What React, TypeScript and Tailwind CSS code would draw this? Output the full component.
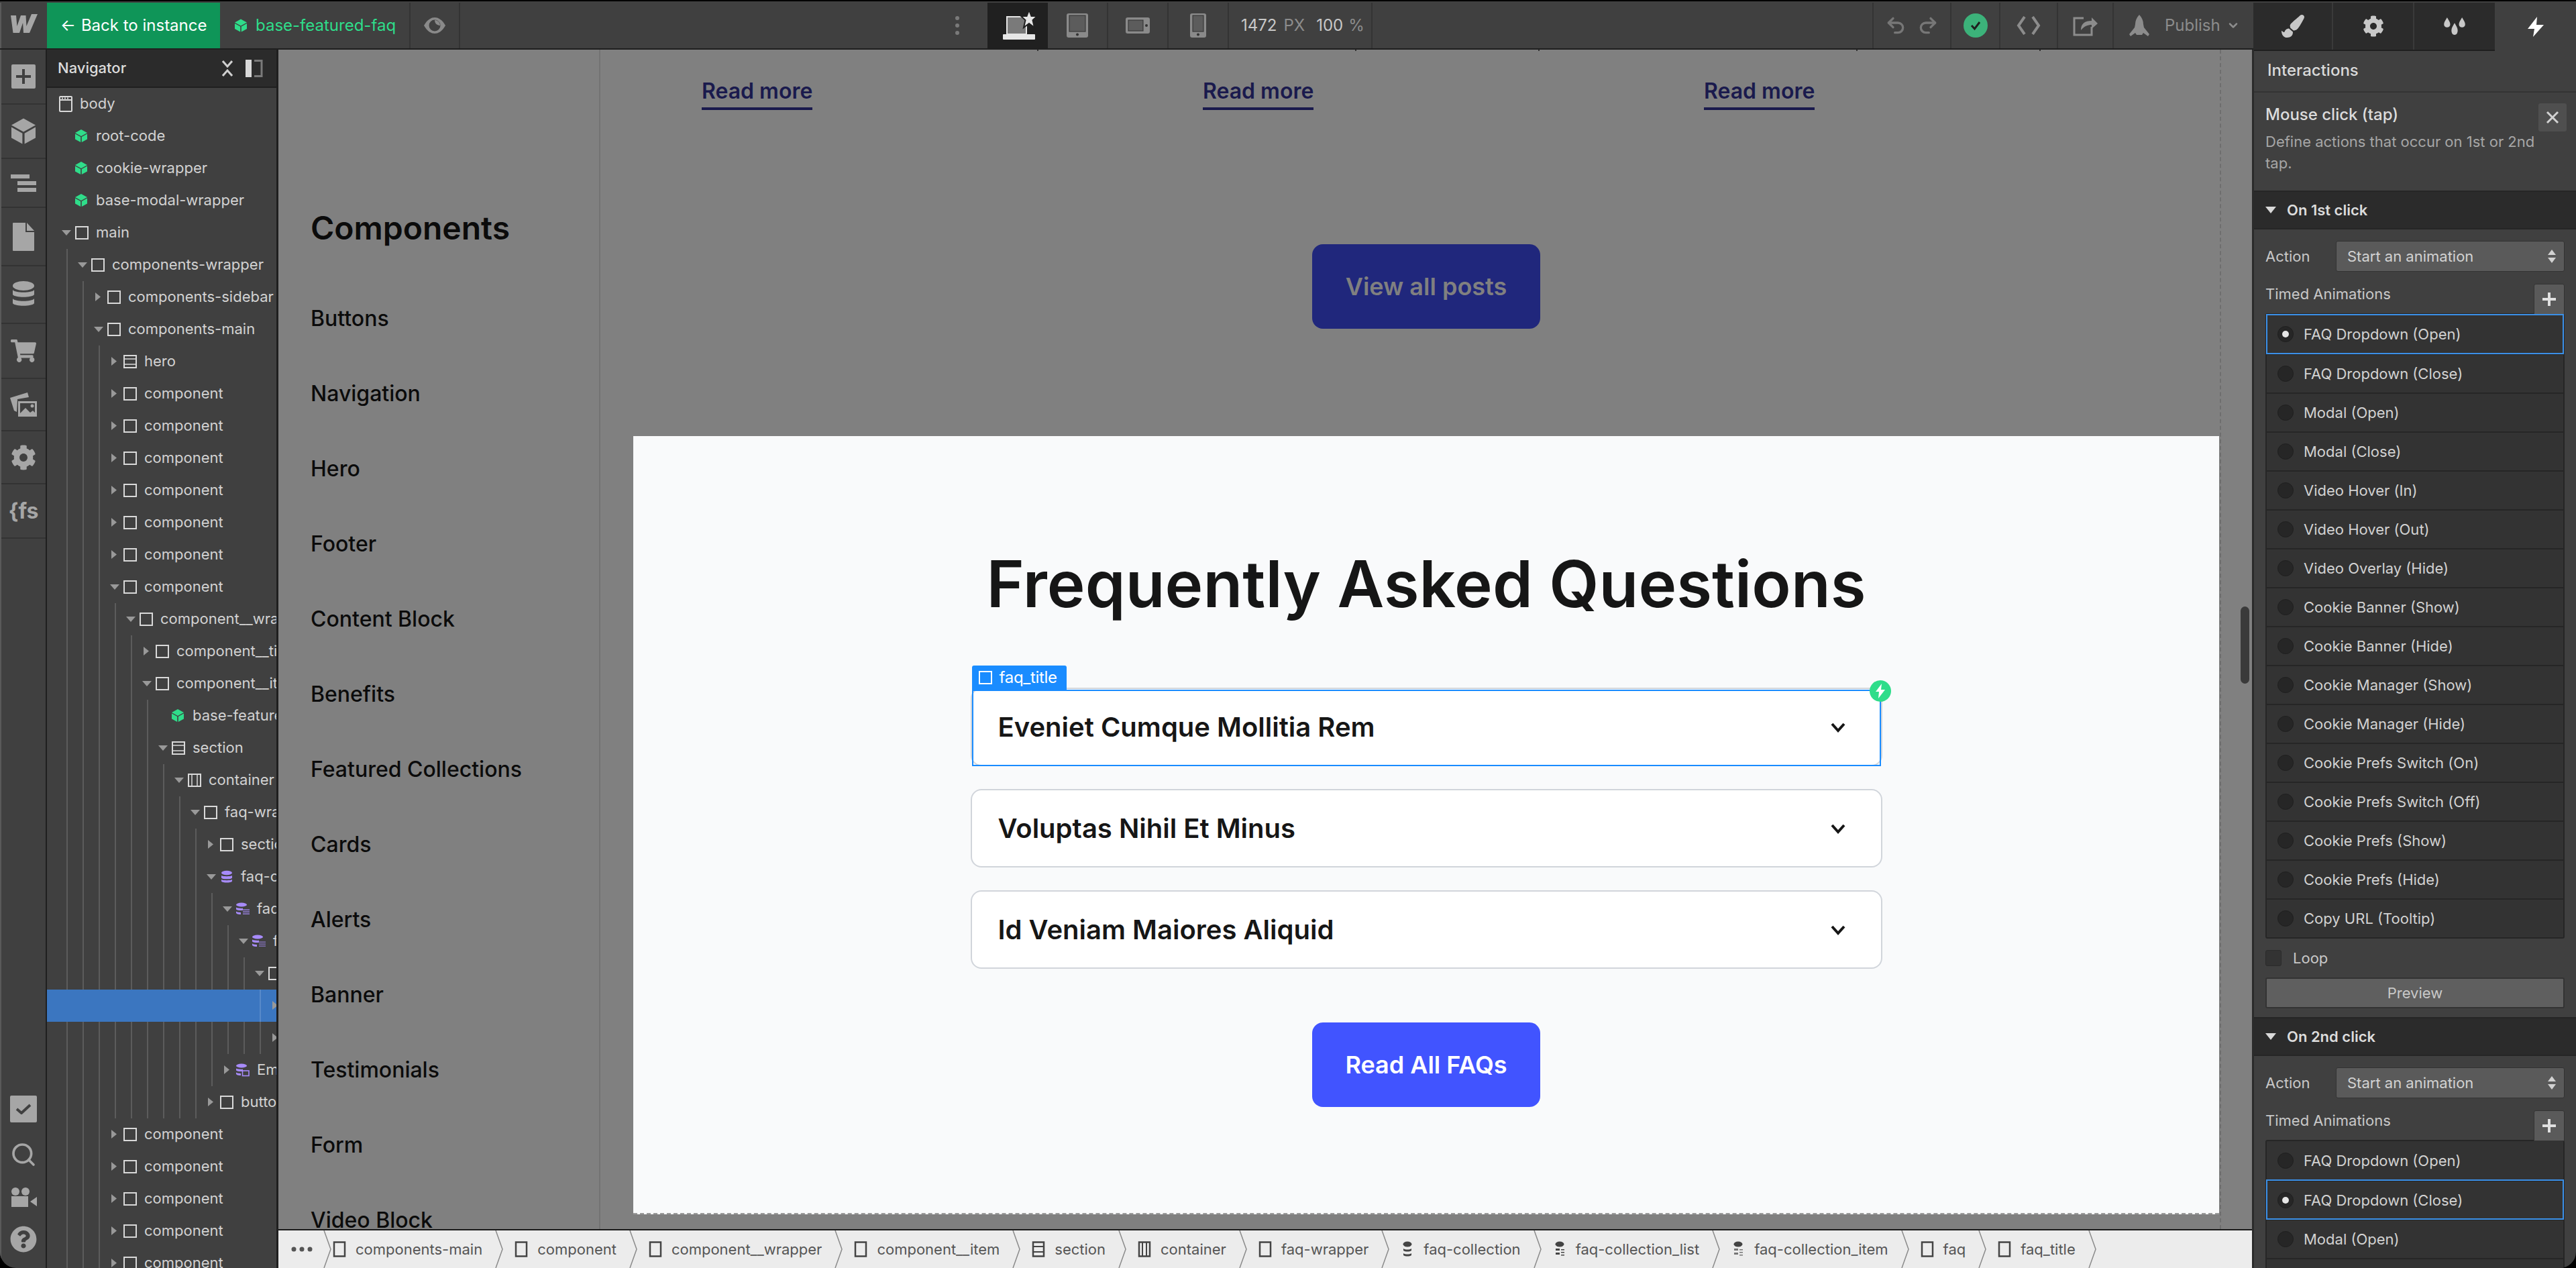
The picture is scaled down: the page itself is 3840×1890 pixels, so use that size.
import React from "react";
import { FaCog, FaShoppingCart, FaQuestionCircle, FaPaintBrush } from "react-icons/fa";
import { Search, Undo2, Redo2, ChevronDown } from "lucide-react";

type Kind = "box" | "sec" | "con" | "cube" | "col" | "list" | "item" | "empty" | "body";
type N = { t: string; k: Kind; open?: boolean; leaf?: boolean; sel?: boolean; c?: N[] };

const Cube = ({ className }: { className?: string }) => (
  <svg viewBox="0 0 18 19" className={className} fill="currentColor">
    <path d="M9 0 18 5 9 10 0 5Z" />
    <path d="M0 6.500 8.200 11.100V19L0 14.500Z" />
    <path d="M18 6.500 9.800 11.100V19L18 14.500Z" />
  </svg>
);

const KindIcon = ({ k }: { k: Kind }) => {
  if (k === "cube") return <span className="w-5 flex justify-start shrink-0"><Cube className="w-[18px] h-[19px] text-[#2fdd8a]" /></span>;
  if (k === "body")
    return (
      <svg viewBox="0 0 20 24" className="w-5 h-6 text-[#d9d9d9] shrink-0" fill="none" stroke="currentColor" strokeWidth="2">
        <rect x="1" y="1" width="18" height="22" rx="1" />
        <path d="M1 6h18M4 3.500h2M8 3.500h2M12 3.500h2" />
      </svg>
    );
  if (k === "col")
    return (
      <svg viewBox="0 0 20 20" className="w-5 h-5 text-[#a78bfa] shrink-0" fill="currentColor">
        <ellipse cx="10" cy="4" rx="8" ry="3.200" />
        <path d="M2 8c2 1.600 14 1.600 16 0v3.400c-1.500 2.600-14.500 2.600-16 0ZM2 14c2 1.600 14 1.600 16 0v2.400c-1.500 2.800-14.500 2.800-16 0Z" />
      </svg>
    );
  if (k === "list" || k === "item" || k === "empty")
    return (
      <svg viewBox="0 0 20 20" className="w-5 h-5 text-[#a78bfa] shrink-0" fill="currentColor">
        <ellipse cx="8" cy="3.500" rx="8" ry="3" />
        <path d="M0 7.500c2 1.300 8 1.600 10 1.300v3c-3 .6-8 .3-10-1.300ZM0 13.500c2 1.300 5 1.500 7 1.400v3c-3 .3-6-.3-7-1.800Z" />
        {k === "empty" ? (
          <rect x="9.500" y="11" width="9.500" height="7.500" fill="none" stroke="currentColor" strokeWidth="1.600" />
        ) : (
          <path d="M10 11.200h10M10 14.200h10M10 17.200h10" stroke="currentColor" strokeWidth="1.300" opacity={k === "item" ? 0.75 : 1} />
        )}
      </svg>
    );
  return (
    <svg viewBox="0 0 20 20" className="w-5 h-5 text-[#d9d9d9] shrink-0" fill="none" stroke="currentColor" strokeWidth="2">
      <rect x="1" y="1" width="18" height="18" />
      {k === "sec" && <path d="M1 6h18M1 14h18" strokeWidth="1.500" />}
      {k === "con" && <path d="M6 1v18M14 1v18" strokeWidth="1.500" />}
    </svg>
  );
};

const comp = (): N => ({ t: "component", k: "box" });
const tree: N = {
  t: "body",
  k: "body",
  open: true,
  leaf: true,
  c: [
    { t: "root-code", k: "cube", leaf: true },
    { t: "cookie-wrapper", k: "cube", leaf: true },
    { t: "base-modal-wrapper", k: "cube", leaf: true },
    {
      t: "main",
      k: "box",
      open: true,
      c: [
        {
          t: "components-wrapper",
          k: "box",
          open: true,
          c: [
            { t: "components-sidebar", k: "box" },
            {
              t: "components-main",
              k: "box",
              open: true,
              c: [
                { t: "hero", k: "sec" },
                comp(), comp(), comp(), comp(), comp(), comp(),
                {
                  t: "component",
                  k: "box",
                  open: true,
                  c: [
                    {
                      t: "component__wrapper",
                      k: "box",
                      open: true,
                      c: [
                        { t: "component__title", k: "box" },
                        {
                          t: "component__item",
                          k: "box",
                          open: true,
                          c: [
                            { t: "base-featured-faq", k: "cube", leaf: true },
                            {
                              t: "section",
                              k: "sec",
                              open: true,
                              c: [
                                {
                                  t: "container",
                                  k: "con",
                                  open: true,
                                  c: [
                                    {
                                      t: "faq-wrapper",
                                      k: "box",
                                      open: true,
                                      c: [
                                        { t: "section-header", k: "box" },
                                        {
                                          t: "faq-collection",
                                          k: "col",
                                          open: true,
                                          c: [
                                            {
                                              t: "faq-collection_list",
                                              k: "list",
                                              open: true,
                                              c: [
                                                {
                                                  t: "faq-collection_item",
                                                  k: "item",
                                                  open: true,
                                                  c: [
                                                    {
                                                      t: "faq",
                                                      k: "box",
                                                      open: true,
                                                      c: [
                                                        { t: "faq_title", k: "box", sel: true },
                                                        { t: "faq_content", k: "box" },
                                                      ],
                                                    },
                                                  ],
                                                },
                                              ],
                                            },
                                            { t: "Empty State", k: "empty" },
                                          ],
                                        },
                                        { t: "button", k: "box" },
                                      ],
                                    },
                                  ],
                                },
                              ],
                            },
                          ],
                        },
                      ],
                    },
                  ],
                },
                comp(), comp(), comp(), comp(), comp(), comp(),
              ],
            },
          ],
        },
      ],
    },
  ],
};

const Arrow = ({ open }: { open?: boolean }) =>
  open ? (
    <svg viewBox="0 0 14 8" className="w-[14px] h-2 -ml-[2px] text-[#999]" fill="currentColor">
      <path d="M0 0h14L7 8Z" />
    </svg>
  ) : (
    <svg viewBox="0 0 8 13" className="w-2 h-[13px] text-[#999]" fill="currentColor">
      <path d="M0 0l8 6.500L0 13Z" />
    </svg>
  );

const Node = ({ n, d }: { n: N; d: number }) => (
  <>
    <div
      className={`flex items-center h-12 whitespace-nowrap pb-[1px] ${n.sel ? "bg-[#3b76c0]" : ""}`}
      style={{ paddingLeft: 24 * d }}
    >
      <span className="w-[18px] shrink-0 flex items-center">{!n.leaf && <Arrow open={n.open} />}</span>
      <KindIcon k={n.k} />
      <span className={`ml-[11px] ${n.sel ? "text-white" : "text-[#d2d2d2]"}`}>{n.t}</span>
    </div>
    {n.c && (
      <div className="relative">
        {n.k !== "body" && (
          <div className="absolute top-0 bottom-0 w-[2px] bg-white/15" style={{ left: 5 + 24 * d }} />
        )}
        {n.c.map((x, i) => (
          <Node key={i} n={x} d={d + 1} />
        ))}
      </div>
    )}
  </>
);

const Logo = () => (
  <svg viewBox="0 0 40 28" className="w-10 h-7 text-[#a6a6a6]" fill="currentColor">
    <path d="M40 0 28 28h-9l-.9-15L13 28H3.500L0 2h8l1.400 16L15 2h7.500l.9 16L31 0Z" />
  </svg>
);

const Vsep = () => <div className="w-[2px] self-stretch bg-[#343434] shrink-0" />;

const Device = ({ w, h, kind, active }: { w: number; h: number; kind: string; active?: boolean }) => (
  <div className={`w-[90px] h-full flex items-center justify-center shrink-0 ${active ? "bg-[#202020]" : "border-r-2 border-[#343434]"}`}>
    {kind === "desktop" ? (
      <svg viewBox="0 0 52 46" className="w-[52px] h-[46px] ml-[6px]">
        <path d="M7 10h29v26H7Z" fill="#7a7a7a" stroke="#e6e6e6" strokeWidth="2" />
        <rect x="1" y="36" width="48" height="8" rx="1" fill="#e6e6e6" />
        <path d="M40 0l3.500 9H52l-6.500 6 2.500 11-8-6-8 6 2.500-11L28 9h8.500Z" fill="#e6e6e6" stroke="#202020" strokeWidth="2" />
      </svg>
    ) : (
      <svg viewBox={`0 0 ${w} ${h}`} style={{ width: w, height: h }}>
        <rect width={w} height={h} rx="3" fill="#8a8a8a" />
        {kind === "land" ? (
          <>
            <rect x="4" y="4" width={w - 14} height={h - 8} fill="#5c5c5c" stroke="#2e2e2e" />
            <circle cx={w - 5} cy={h / 2} r="2" fill="#333" />
          </>
        ) : (
          <>
            <rect x="4" y="3" width={w - 8} height={h - 12} fill="#5c5c5c" stroke="#2e2e2e" />
            <circle cx={w / 2} cy={h - 4.500} r="2" fill="#333" />
          </>
        )}
      </svg>
    )}
  </div>
);

const TopBar = () => (
  <div className="flex h-[72px] pt-[2px] bg-[#404040] shrink-0 text-[24px]">
    <div className="flex flex-1 min-w-0 h-[70px] border-b-2 border-[#1f1f1f]">
      <div className="w-[70px] flex items-center justify-center pb-[6px] shrink-0 border-l-2 border-[#5a5a5a]">
        <Logo />
      </div>
      <div className="w-[258px] h-full bg-[#0f9558] text-white flex items-center pl-5 shrink-0 gap-[8px]">
        <span className="leading-none">←</span>
        <span>Back to instance</span>
      </div>
      <div className="w-[282px] flex items-center pl-[22px] gap-[13px] text-[#2fdd8a] shrink-0 whitespace-nowrap">
        <Cube className="w-[18px] h-5" />
        <span>base-featured-faq</span>
      </div>
      <Vsep />
      <div className="w-[72px] flex items-center justify-center shrink-0">
        <svg viewBox="0 0 32 24" className="w-8 h-6">
          <path d="M0 12C5 3 11 0 16 0s11 3 16 12c-5 9-11 12-16 12S5 21 0 12Z" fill="#8a8a8a" />
          <circle cx="16" cy="12" r="8.500" fill="#404040" />
          <path d="M16 4a8 8 0 0 1 8 8c-3 0-8-2-8-8Z" fill="#8a8a8a" />
        </svg>
      </div>
      <Vsep />
      <div className="w-[786px] flex items-center justify-end pr-[42px] shrink-0">
        <svg viewBox="0 0 6 28" className="w-[6px] h-7 text-[#7a7a7a]" fill="currentColor">
          <circle cx="3" cy="3" r="3" /><circle cx="3" cy="14" r="3" /><circle cx="3" cy="25" r="3" />
        </svg>
      </div>
      <Device w={0} h={0} kind="desktop" active />
      <Device w={32} h={36} kind="port" />
      <Device w={36} h={24} kind="land" />
      <Device w={24} h={36} kind="port" />
      <div className="w-[212px] flex items-center pl-[18px] shrink-0 text-[#c8c8c8]">
        <span>1472</span>
        <span className="ml-[10px] text-[#8c8c8c]">PX</span>
        <span className="ml-[17px]">100</span>
        <span className="ml-[8px] text-[#8c8c8c]">%</span>
      </div>
      <Vsep />
      <div className="flex-1" />
      <Vsep />
      <div className="w-[114px] flex items-center justify-center gap-[16px] shrink-0 text-[#777]">
        <Undo2 size={32} strokeWidth={2.5} />
        <Redo2 size={32} strokeWidth={2.5} />
      </div>
      <Vsep />
      <div className="w-[71px] flex items-center justify-center shrink-0">
        <div className="w-9 h-9 rounded-full bg-[#3cb27a] flex items-center justify-center">
          <svg viewBox="0 0 20 20" className="w-5 h-5" fill="none" stroke="#1f1f1f" strokeWidth="3">
            <path d="M4 10l4.500 5L16 5" />
          </svg>
        </div>
      </div>
      <Vsep />
      <div className="w-[84px] flex items-center justify-center shrink-0">
        <svg viewBox="0 0 40 28" className="w-10 h-7 text-[#8c8c8c]" fill="none" stroke="currentColor" strokeWidth="4">
          <path d="M14 1 5 14l9 13M26 1l9 13-9 13" />
        </svg>
      </div>
      <Vsep />
      <div className="w-[81px] flex items-center justify-center shrink-0">
        <svg viewBox="0 0 38 32" className="w-[38px] h-8 text-[#8c8c8c]" fill="none" stroke="currentColor" strokeWidth="3">
          <path d="M16 5H2v25h26V18" />
          <path d="M12 23c0-10 6-14 16-14V4l9 9-9 8v-6c-6 0-11 2-16 8Z" fill="currentColor" stroke="none" />
        </svg>
      </div>
      <Vsep />
      <div className="w-[208px] flex items-center pl-[22px] shrink-0 text-[#8c8c8c] text-[24px]">
        <svg viewBox="0 0 32 32" className="w-8 h-8 shrink-0" fill="currentColor">
          <path d="M16 0c4 4 6 9 6 14l1 5 8 10-2 3-7-5-2 3h-8l-2-3-7 5-2-3 8-10 1-5c0-5 2-10 6-14Z" />
        </svg>
        <span className="ml-[22px]">Publish</span>
        <ChevronDown size={20} strokeWidth={3} className="ml-[9px]" />
      </div>
    </div>
    <div className="w-[481px] flex shrink-0 h-[72px]">
      <div className="w-[360px] flex bg-[#2b2b2b] border-b-2 border-[#1f1f1f]">
        <div className="w-[119px] flex items-center justify-center text-[#c8c8c8] border-r-2 border-[#3a3a3a]">
          <FaPaintBrush size={34} />
        </div>
        <div className="w-[121px] flex items-center justify-center text-[#c8c8c8] border-r-2 border-[#3a3a3a]">
          <FaCog size={32} />
        </div>
        <div className="w-[120px] flex items-center justify-center text-[#c8c8c8]">
          <svg viewBox="0 0 36 28" className="w-[34px] h-[26px]" fill="currentColor">
            <path d="M6 0c3 5 5 8 5 11 0 3-2 5-5 5s-5-2-5-5c0-3 2-6 5-11ZM30 0c3 5 5 8 5 11 0 3-2 5-5 5s-5-2-5-5c0-3 2-6 5-11ZM18 9c3 5 5 8 5 12 0 4-2 7-5 7s-5-3-5-7c0-4 2-7 5-12Z" />
          </svg>
        </div>
      </div>
      <div className="flex-1 flex items-center justify-center text-white">
        <svg viewBox="0 0 24 30" className="w-6 h-[30px]" fill="currentColor">
          <path d="M14 0 0 18h10L8 30l16-18H13Z" />
        </svg>
      </div>
    </div>
  </div>
);

const RailCell = ({ h, children }: { h: string; children: React.ReactNode }) => (
  <div className={`${h} flex items-center justify-center border-b-2 border-[#333] shrink-0`}>{children}</div>
);

const Rail = () => (
  <div className="w-[70px] shrink-0 flex flex-col border-l-2 border-[#5a5a5a] border-r-2 border-r-[#1f1f1f] text-[#a6a6a6] pb-[23px]">
    <RailCell h="h-[82px]">
      <div className="w-9 h-9 bg-[#a6a6a6] rounded-[2px] flex items-center justify-center">
        <svg viewBox="0 0 22 22" className="w-[22px] h-[22px]"><path d="M9 0h4v9h9v4h-9v9H9v-9H0V9h9Z" fill="#404040" /></svg>
      </div>
    </RailCell>
    <RailCell h="h-[81px]"><Cube className="w-9 h-[39px]" /></RailCell>
    <RailCell h="h-[73px]">
      <svg viewBox="0 0 38 26" className="w-[38px] h-[26px]" fill="currentColor">
        <path d="M0 0h28v6H0ZM10 10h28v6H10ZM10 20h28v6H10Z" />
      </svg>
    </RailCell>
    <RailCell h="h-[87px]">
      <svg viewBox="0 0 32 42" className="w-8 h-[42px]" fill="currentColor">
        <path d="M0 1a1 1 0 0 1 1-1h18v14h13v27a1 1 0 0 1-1 1H1a1 1 0 0 1-1-1Z" />
        <path d="M21 0l11 12H21Z" />
      </svg>
    </RailCell>
    <RailCell h="h-[86px]">
      <svg viewBox="0 0 32 40" className="w-8 h-10" fill="currentColor">
        <ellipse cx="16" cy="7" rx="16" ry="7" />
        <path d="M0 13c3 5 29 5 32 0v7c-3 5-29 5-32 0ZM0 26c3 5 29 5 32 0v7c-3 5-29 5-32 0Z" />
      </svg>
    </RailCell>
    <RailCell h="h-[82px]"><FaShoppingCart size={38} /></RailCell>
    <RailCell h="h-[78px]">
      <svg viewBox="0 0 40 36" className="w-10 h-9" fill="currentColor">
        <path d="M0 8 26 0l2 7-17 3-1 19-4-2Z" />
        <path d="M12 13h28v23H12Zm3 3v15l8-8 7 7 4-3 3 3V16Z" fillRule="evenodd" />
        <circle cx="33" cy="20" r="2.500" />
      </svg>
    </RailCell>
    <RailCell h="h-[79px]"><FaCog size={38} /></RailCell>
    <RailCell h="h-[81px]"><span className="text-[32px] font-bold leading-none">{"{fs"}</span></RailCell>
    <div className="mt-auto flex flex-col items-center gap-[28px]">
      <div className="w-10 h-10 bg-[#a6a6a6] rounded-[2px] flex items-center justify-center">
        <svg viewBox="0 0 24 16" className="w-6 h-4" fill="none" stroke="#404040" strokeWidth="4"><path d="M2 8l7 6L22 2" /></svg>
      </div>
      <Search size={40} strokeWidth={2.2} />
      <svg viewBox="0 0 40 30" className="w-10 h-[30px]" fill="currentColor">
        <circle cx="8" cy="7" r="6" /><circle cx="23" cy="7" r="6" />
        <path d="M2 14h25v16H2ZM30 22l10-7v14Z" />
      </svg>
      <FaQuestionCircle size={40} />
    </div>
  </div>
);

const Nav = () => (
  <div className="w-[345px] shrink-0 border-r-[3px] border-[#1f1f1f] overflow-hidden flex flex-col text-[22px]">
    <div className="h-[57px] bg-[#2b2b2b] border-b-2 border-[#1f1f1f] flex items-center pl-[16px] pr-[20px] shrink-0">
      <span className="text-[#dcdcdc] font-medium flex-1">Navigator</span>
      <svg viewBox="0 0 16 24" className="w-4 h-6 mr-[19px] text-[#cfcfcf]" fill="none" stroke="currentColor" strokeWidth="3">
        <path d="M1 1l7 8 7-8M1 23l7-8 7 8" />
      </svg>
      <svg viewBox="0 0 26 26" className="w-[26px] h-[26px]">
        <rect width="9" height="26" fill="#d9d9d9" />
        <path d="M13 1.500h11v23H13" fill="none" stroke="#7a7a7a" strokeWidth="3" />
      </svg>
    </div>
    <div className="shrink-0">
      <Node n={tree} d={0} />
    </div>
  </div>
);

const faqs = ["Eveniet Cumque Mollitia Rem", "Voluptas Nihil Et Minus", "Id Veniam Maiores Aliquid"];
const sideItems = ["Buttons", "Navigation", "Hero", "Footer", "Content Block", "Benefits", "Featured Collections", "Cards", "Alerts", "Banner", "Testimonials", "Form", "Video Block"];

const FaqItem = ({ t, selected }: { t: string; selected?: boolean }) => (
  <div className="relative h-[117px] w-full rounded-2xl border-2 border-[#d1d5db] bg-white flex items-center pl-[39px] pr-[52px]">
    <span className="flex-1 text-[40px] font-semibold text-[#161616] leading-none">{t}</span>
    <svg viewBox="0 0 24 16" className="w-6 h-4 text-[#161616]" fill="none" stroke="currentColor" strokeWidth="4">
      <path d="M3 3l9 10 9-10" />
    </svg>
    {selected && (
      <>
        <div className="absolute left-0 right-0 top-px -bottom-[2px] border-2 border-[#1a8cff] pointer-events-none" />
        <div className="absolute left-0 -top-[35px] h-[36px] w-[141px] bg-[#1a8cff] rounded-t-[3px] flex items-center pl-[10px] gap-[11px] text-white text-[24px] leading-none font-normal">
          <svg viewBox="0 0 20 20" className="w-5 h-5 shrink-0" fill="none" stroke="currentColor" strokeWidth="2"><rect x="1" y="1" width="18" height="18" /></svg>
          <span className="tracking-[-0.3px]">faq_title</span>
        </div>
        <div className="absolute -right-[15px] -top-[13px] w-8 h-8 rounded-full bg-[#2fdd8a] flex items-center justify-center">
          <svg viewBox="0 0 14 22" className="w-[14px] h-[22px]" fill="#ffffff"><path d="M9 0 0 12h5L4 22l10-13H8Z" /></svg>
        </div>
      </>
    )}
  </div>
);

const ticks = [1131, 1605, 1878, 2352, 2625];

const Canvas = () => (
  <div className="relative flex-1 min-h-0 flex bg-[#808080] overflow-hidden font-medium">
    <div className="w-[480px] shrink-0 border-r-2 border-[#737373] pl-[48px] pt-[235px]">
      <div className="h-[62px] flex items-center text-[48px] font-semibold text-[#0b0b0b] leading-none mb-[48px]">Components</div>
      <div className="flex flex-col">
        {sideItems.map((s) => (
          <div key={s} className="h-[112px] shrink-0 flex items-center text-[32px] text-[#0b0b0b] leading-none">{s}</div>
        ))}
      </div>
    </div>
    <div className="pl-[49px] flex flex-col">
      <div className="w-[2364px] flex flex-col items-center shrink-0">
        <div className="w-full flex pl-[102px] pt-[42px]">
          {[0, 1, 2].map((i) => (
            <div key={i} className="w-[747px] shrink-0">
              <span className="inline-block h-[48px] leading-[40px] text-[32px] font-semibold text-[#1a1a4d] border-b-4 border-[#1a1a4d]">Read more</span>
            </div>
          ))}
        </div>
        <div className="mt-[200px] w-[340px] h-[126px] rounded-2xl bg-[#20277c] text-[#808080] flex items-center justify-center text-[36px] font-semibold">View all posts</div>
      </div>
      <div className="mt-[160px] w-[2364px] h-[1160px] shrink-0 bg-[#f9fafb] border-b-2 border-dashed border-[#9a9a9a] flex flex-col items-center pt-[158px]">
        <h1 className="h-[124px] leading-[124px] text-[96px] font-semibold text-[#161616] tracking-[0.1px]">Frequently Asked Questions</h1>
        <div className="mt-[93px] w-[1359px] flex flex-col gap-[34px]">
          {faqs.map((f, i) => (
            <FaqItem key={f} t={f} selected={i === 0} />
          ))}
        </div>
        <div className="mt-[80px] w-[340px] h-[126px] rounded-2xl bg-[#4154ff] text-white flex items-center justify-center text-[36px] font-semibold">Read All FAQs</div>
      </div>
    </div>
    <div className="w-[2px] h-full ml-px border-l-2 border-dashed border-[#6e6e6e] shrink-0" />
    <div className="absolute left-[2925px] top-[830px] w-[13px] h-[115px] rounded-full bg-[#3a3a3a]" />
    {ticks.map((x) => (
      <div key={x} className="absolute top-0 w-[2px] h-[2px] bg-[#333]" style={{ left: x }} />
    ))}
  </div>
);

const crumbs: { t: string; k: Kind }[] = [
  { t: "components-main", k: "box" },
  { t: "component", k: "box" },
  { t: "component__wrapper", k: "box" },
  { t: "component__item", k: "box" },
  { t: "section", k: "sec" },
  { t: "container", k: "con" },
  { t: "faq-wrapper", k: "box" },
  { t: "faq-collection", k: "col" },
  { t: "faq-collection_list", k: "list" },
  { t: "faq-collection_item", k: "item" },
  { t: "faq", k: "box" },
  { t: "faq_title", k: "box" },
];

const Tip = () => (
  <svg viewBox="0 0 14 56" className="w-[14px] h-[56px] shrink-0 text-[#8a8a8a]" fill="none" stroke="currentColor" strokeWidth="1.500">
    <path d="M1 0l10 28L1 56" />
  </svg>
);

const CrumbIcon = ({ k }: { k: Kind }) => {
  if (k === "col" || k === "list" || k === "item")
    return (
      <span className="w-5 flex justify-center shrink-0">
        <svg viewBox="0 0 14 24" className="w-[14px] h-6 text-[#444]" fill="currentColor">
          <ellipse cx="7" cy="4.500" rx="6.500" ry="4" />
          {k === "col" ? (
            <path d="M1 11c3 2 9 2 12 0v3c-3 2-9 2-12 0ZM1 18c3 2 9 2 12 0v3c-3 2-9 2-12 0Z" />
          ) : (
            <path d="M1 11h6v3H1ZM1 17h6v3H1ZM9 12h5v1.500H9ZM9 16h5v1.500H9ZM9 20h5v1.500H9Z" opacity={k === "item" ? 0.7 : 1} />
          )}
        </svg>
      </span>
    );
  return (
    <svg viewBox="0 0 20 24" className="w-5 h-6 shrink-0 text-[#444]" fill="none" stroke="currentColor" strokeWidth="2.500">
      <rect x="2" y="1.500" width="16" height="21" />
      {k === "sec" && <path d="M2 8h16M2 16h16" strokeWidth="2" />}
      {k === "con" && <path d="M7 1.500v21M13 1.500v21" strokeWidth="2" />}
    </svg>
  );
};

const Breadcrumbs = () => (
  <div className="h-[58px] shrink-0 border-t-2 border-[#1a1a1a] bg-[#ececec] flex items-center text-[22px] text-[#555] whitespace-nowrap overflow-hidden">
    <div className="w-[67px] shrink-0 flex items-center justify-center pl-[2px]">
      <svg viewBox="0 0 32 8" className="w-8 h-2" fill="#555"><circle cx="4" cy="4" r="3.500" /><circle cx="16" cy="4" r="3.500" /><circle cx="28" cy="4" r="3.500" /></svg>
    </div>
    <Tip />
    {crumbs.map((c, i) => (
      <div key={c.t} className={`flex items-center shrink-0 ${i === 0 ? "" : "pl-[15px]"}`}>
        <CrumbIcon k={c.k} />
        <span className="ml-[14px]">{c.t}</span>
        <span className="w-[19px]" />
        <Tip />
      </div>
    ))}
  </div>
);

const anims = [
  "FAQ Dropdown (Open)", "FAQ Dropdown (Close)", "Modal (Open)", "Modal (Close)", "Video Hover (In)", "Video Hover (Out)",
  "Video Overlay (Hide)", "Cookie Banner (Show)", "Cookie Banner (Hide)", "Cookie Manager (Show)", "Cookie Manager (Hide)",
  "Cookie Prefs Switch (On)", "Cookie Prefs Switch (Off)", "Cookie Prefs (Show)", "Cookie Prefs (Hide)", "Copy URL (Tooltip)",
];

const AnimList = ({ items, active }: { items: string[]; active: number }) => (
  <div className="border-2 border-[#262626] rounded-[3px] bg-[#333] -mt-px">
    {items.map((a, i) => (
      <div
        key={a}
        className={`h-[58px] flex items-center pl-[16px] text-[#d2d2d2] ${i === active ? "outline-2 -outline-offset-1 outline-[#3b90e8] relative" : ""} ${i > 0 ? "border-t-2 border-[#262626]" : ""}`}
      >
        <div className="w-6 h-6 rounded-full bg-[#262626] border border-[#1f1f1f] flex items-center justify-center shrink-0">
          {i === active && <div className="w-[10px] h-[10px] rounded-full bg-[#e6e6e6]" />}
        </div>
        <span className="ml-[15px]">{a}</span>
      </div>
    ))}
  </div>
);

const ActionBlock = ({ title, items, active }: { title: string; items: string[]; active: number }) => (
  <>
    <div className="h-[58px] bg-[#2b2b2b] border-y-2 border-[#262626] flex items-center px-[17px] shrink-0">
      <svg viewBox="0 0 16 10" className="w-4 h-[10px] text-[#d9d9d9]" fill="currentColor"><path d="M0 0h16L8 10Z" /></svg>
      <span className="ml-[16px] font-semibold text-[#dcdcdc]">{title}</span>
    </div>
    <div className="px-[17px] pt-[17px] shrink-0">
      <div className="flex items-center h-[46px]">
        <span className="w-[105px] text-[#c8c8c8]">Action</span>
        <div className="flex-1 h-[46px] rounded-[3px] bg-[#5a5a5a] border border-[#333] flex items-center pl-[16px] pr-[12px] text-[#d2d2d2]">
          <span className="flex-1">Start an animation</span>
          <svg viewBox="0 0 12 20" className="w-3 h-5 text-[#d2d2d2]" fill="currentColor"><path d="M6 0l6 8H0ZM6 20l-6-8h12Z" /></svg>
        </div>
      </div>
      <div className="flex items-start h-[63px] pt-[18px]">
        <span className="flex-1 text-[#c8c8c8] leading-[30px]">Timed Animations</span>
        <div className="w-[46px] h-[46px] rounded-t-[3px] bg-[#5a5a5a] border border-[#333] flex items-center justify-center text-white">
          <svg viewBox="0 0 20 20" className="w-5 h-5 text-[#e0e0e0]" fill="currentColor"><path d="M8 0h4v8h8v4h-8v8H8v-8H0V8h8Z" /></svg>
        </div>
      </div>
      <AnimList items={items} active={active} />
    </div>
  </>
);

const Panel = () => (
  <div className="w-[483px] shrink-0 border-l-[3px] border-[#2b2b2b] overflow-hidden flex flex-col text-[22px]">
    <div className="h-[64px] shrink-0 border-b-2 border-[#333] flex items-center pl-[20px] text-[#d9d9d9] font-medium text-[24px]">Interactions</div>
    <div className="relative h-[146px] shrink-0 pl-[17px] pt-[15px]">
      <div className="font-medium text-[#dcdcdc] leading-[36px] text-[24px]">Mouse click (tap)</div>
      <div className="text-[#a6a6a6] leading-[32px] w-[415px] mt-[6px]">Define actions that occur on 1st or 2nd tap.</div>
      <div className="absolute right-[14px] top-[16px] w-[42px] h-[42px] rounded-[3px] bg-[#4f4f4f] flex items-center justify-center">
        <svg viewBox="0 0 20 20" className="w-5 h-5 text-[#d2d2d2]" fill="none" stroke="currentColor" strokeWidth="3"><path d="M2 2l16 16M18 2 2 18" /></svg>
      </div>
    </div>
    <ActionBlock title="On 1st click" items={anims} active={0} />
    <div className="px-[17px] shrink-0">
      <div className="h-[58px] flex items-center">
        <div className="w-6 h-6 rounded-[3px] bg-[#333] border border-[#2b2b2b]" />
        <span className="ml-[17px] text-[#c8c8c8]">Loop</span>
      </div>
      <div className="h-[46px] rounded-[3px] bg-[#5f5f5f] border-2 border-[#333] flex items-center justify-center text-[#c8c8c8]">Preview</div>
    </div>
    <div className="h-[13px] shrink-0" />
    <ActionBlock title="On 2nd click" items={anims.slice(0, 4)} active={1} />
  </div>
);

export default function App() {
  return (
    <div className="w-[3840px] h-[1890px] bg-black overflow-hidden pt-[2px] font-['Inter',sans-serif] text-[22px]">
      <div className="h-[1888px] bg-[#404040] rounded-b-[24px] overflow-hidden flex flex-col">
        <TopBar />
        <div className="flex flex-1 min-h-0">
          <Rail />
          <Nav />
          <div className="flex-1 min-w-0 flex flex-col">
            <Canvas />
            <Breadcrumbs />
          </div>
          <Panel />
        </div>
      </div>
    </div>
  );
}
